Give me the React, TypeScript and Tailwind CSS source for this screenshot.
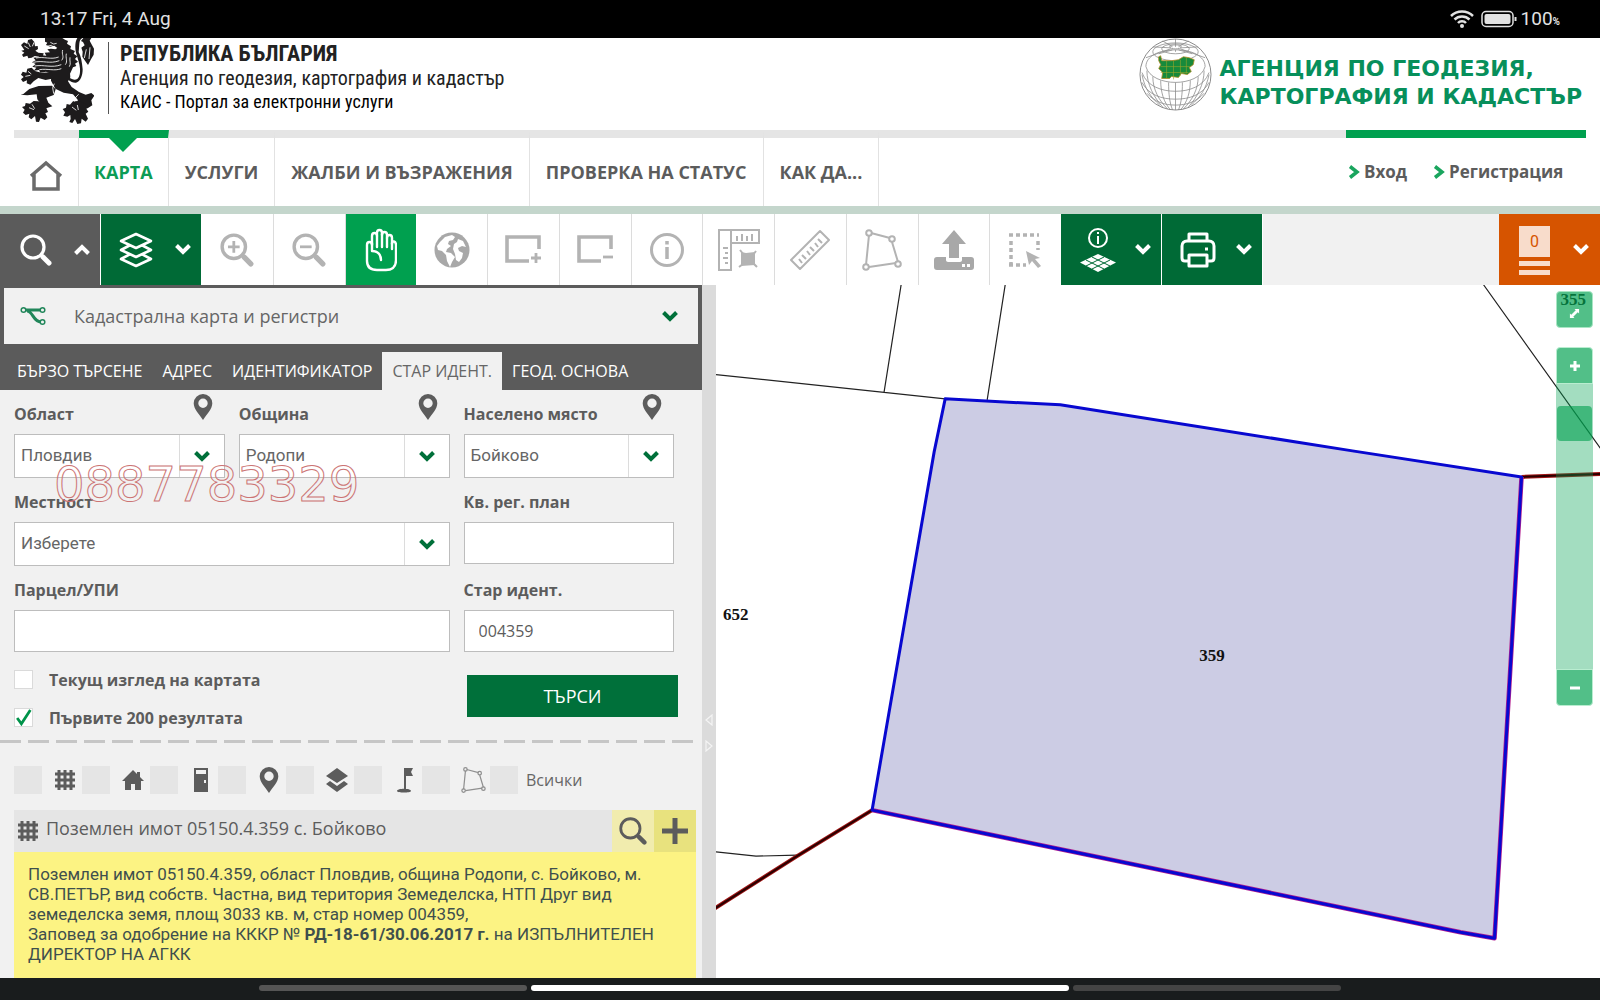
import { useState, type ReactNode } from "react";

const NAV_ITEMS = ["КАРТА", "УСЛУГИ", "ЖАЛБИ И ВЪЗРАЖЕНИЯ", "ПРОВЕРКА НА СТАТУС", "КАК ДА..."];

const SEARCH_TABS = ["БЪРЗО ТЪРСЕНЕ", "АДРЕС", "ИДЕНТИФИКАТОР", "СТАР ИДЕНТ.", "ГЕОД. ОСНОВА"];

const Chevron = ({ className = "", up = false }: { className?: string; up?: boolean }) => (
  <svg viewBox="0 0 16 11" className={className} fill="none" stroke="currentColor" strokeWidth="4" aria-hidden>
    <path d={up ? "M1.5 9.5 8 3l6.500 6.500" : "M1.500 1.500 8 8l6.500-6.500"} />
  </svg>
);

const Lion = () => (
  <svg viewBox="12 6 228 258" className="h-[86px] w-[76px]" aria-hidden>
    <g fill="#1d1b1c">
      {/* head and mane */}
      <path d="M93 6h52l8 5 9 4-3 8 12 8-2 8 14 6-4 8 11 8-7 8 9 8-9 6 4 7-10 4-11 24-20 4-28-6-22-9-17 3-4-8-16 2 8-9-12-3 10-8-11-5 11-6-7-8 16-1 3-7 20 2-5-9 16-1-8-9 11-2 13 2 6-4-9-7-13 3-12-5 4-7-7-3z" />
      {/* torso and haunch */}
      <path d="M112 106l55-7 2 25-7 12 11 17 22 15 20 8 17-5 9 8-9 14 3 15-14 9-17 2-12-10-1-18-14-16-28-5-25-12-13-24z" />
      {/* front right leg and left hind leg */}
      <path d="M114 149l-40 1-28 9-18 15-8 2 20 2 28-3 2 15 22 28 23-7-12-11-6-15 22-8 6-17z" />
      {/* upper paw */}
      <path d="M21 27l9-8 10 5 2-12 11-3 8 9 2 13 8-1 1 9-8 5 9 6 16 2-3 12-24-4-9 5-10 2-3-8-12 4-4-7 7-6-9-6 9-2z" />
      {/* middle paw */}
      <path d="M26 107l11 3 3-12 13-3 10 10 19 5 30-1 8 18-25 5-22-6-14 10-10 10-11-4 1-9-12 5-6-8 8-7-8-7z" />
      {/* hind paws */}
      <path d="M73 196l-14-1-11 8-13-2-2 9-9 3 8 8-5 9 8 7 11-4-2 11 8 6 11-10 3 17 9 1 5-13 12 7 8-8-6-12 8-4-6-14 6-8z" />
      <path d="M197 195l-20 1-9 10-10-2-2 11-10 4 7 10-5 10 12 3 9-5 1 12-4 9 9 3 8-12 7 15 11-2 2-14 12 9 7-9-7-15 8-6-6-9 7-9z" />
      {/* tail */}
      <path d="M205 6c-12 6-8 22-11 42 7 13 10 30 12 52 0 18-6 37-20 40-7 1-16-3-23-8l1-9c9 7 18 10 24 7 8-5 11-17 10-32-1-18-8-33-12-48-3-15-3-34 4-44zm3 0h24l-5 8 4 8 9 16-1 18-8 14-9 17-9-13-8-12 1-15-4-12 10-7-5-10-6-3z" />
    </g>
    <g fill="none" stroke="#fff" strokeWidth="2.500">
      <path d="M66 66c24-5 45 6 68-3M58 79c29-7 49 6 78-5M62 90c27-5 51 7 80-4M76 101c25-4 45 5 66-3M146 42c-4 14 6 20-3 31M157 53c-3 14 5 22-3 33M168 64c-2 12 4 18-2 28" />
      <path d="M43 20l6 13M31 30l13 8M55 31l5-12M34 121l15-3M42 106l10 8M45 215l15 6M54 205l8 13M174 213l13 10M190 207l3 15M217 40l-6 26M228 34l-3 35" />
      <path d="M109 19l10 5 9-2M98 31l14-3 10 7M121 143l-5 12 3 18M194 175c-8 7-12 12-12 22" />
    </g>
  </svg>
);

const Globe = () => (
  <svg viewBox="0 0 74 74" className="h-[73px] w-[73px] shrink-0" fill="none" stroke="#8b8b8b" strokeWidth=".8" aria-hidden>
    <circle cx="37" cy="37" r="36" stroke="#6c6c6c" />
    <ellipse cx="37" cy="9" rx="6" ry="2" />
    <ellipse cx="37" cy="11" rx="14" ry="5" />
    <ellipse cx="37" cy="14" rx="23" ry="9" />
    <path d="M7 29c0-11 14-17 30-17s30 6 30 17M7 29c3 11 17 16 30 16s27-5 30-16" />
    <path d="M3 35c5 14 20 19 34 19s29-5 34-19M3 45c7 13 20 17 34 17s27-4 34-17M8 56c8 9 18 12 29 12s21-3 29-12" />
    <path d="M37 45v28M30 45c0 12 1 20 4 28M44 45c0 12-1 20-4 28M22 43c0 12 3 22 10 30M52 43c0 12-3 22-10 30M14 39c0 13 6 24 15 33M60 39c0 13-6 24-15 33M8 33c0 14 7 27 16 37M66 33c0 14-7 27-16 37M3 37c3 15 9 23 18 31M71 37c-3 15-9 23-18 31" />
    <path d="M37 9V1M34 9 24 3M40 9l10-6M32 10 14 9M42 10l18-1M32 11 7 20M42 11l25 9M34 12 20 16M40 12l14 4M37 12v2" />
    <path d="M20 19l2-1 1 5h10l7-1 5-3 6 1 5 2-1 5-4 3 2 4-4 3-6-1-3 4-7-1-2 2h-8l1-6-4-4 2-4-2-4z" fill="#178a3b" stroke="#b28c22" />
    <path d="M22 29h30M22 35h28M28 23v18M35 23v19M42 22v16M48 20v16" stroke="#9aa52a" strokeWidth=".6" />
  </svg>
);

const PolygonIcon = ({ className = "" }: { className?: string }) => (
  <svg viewBox="0 0 40 42" className={className} fill="none" stroke="currentColor" strokeWidth="2" aria-hidden>
    <path d="M7 6 4 36M9 4l19 5M30 13l6 20M7 38l27-4" />
    <circle cx="7" cy="4" r="2.800" />
    <circle cx="30" cy="10" r="2.800" />
    <circle cx="36" cy="35" r="2.800" />
    <circle cx="4" cy="38" r="2.800" />
  </svg>
);

const GridIcon = ({ className = "" }: { className?: string }) => (
  <svg viewBox="0 0 20 20" className={className} fill="none" stroke="currentColor" strokeWidth="3" aria-hidden>
    <path d="M4 0v20M10 0v20M16 0v20M0 4h20M0 10h20M0 16h20" />
  </svg>
);

const PinIcon = ({ className = "" }: { className?: string }) => (
  <svg viewBox="0 0 20 26" className={className} fill="currentColor" aria-hidden>
    <path fillRule="evenodd" d="M10 0a9.300 9.300 0 0 1 9.300 9.300C19.300 15 14 20 10 26 6 20 .7 15 .7 9.300A9.300 9.300 0 0 1 10 0zm0 4.600a4.700 4.700 0 1 0 0 9.400 4.700 4.700 0 0 0 0-9.400z" />
  </svg>
);

const LensIcon = ({ className = "", sign }: { className?: string; sign?: "plus" | "minus" }) => (
  <svg viewBox="0 0 32 32" className={className} fill="none" stroke="currentColor" aria-hidden>
    <circle cx="13" cy="13" r="11" strokeWidth="3.200" />
    <path d="M21 21l2 2" strokeWidth="3" />
    <path d="M23 23l6 6" strokeWidth="5" strokeLinecap="round" />
    {sign && <path d={sign === "plus" ? "M7.500 13h11M13 7.500v11" : "M7.500 13h11"} strokeWidth="2.600" />}
  </svg>
);

const LayersIcon = () => (
  <svg viewBox="0 0 34 36" className="h-9 w-[34px]" fill="#006a36" stroke="currentColor" strokeWidth="2.600" strokeLinejoin="round" aria-hidden>
    <path d="M2 27l15-8 15 8-15 7z" />
    <path d="M2 18l15-8 15 8-15 7z" />
    <path d="M2 9l15-7 15 7-15 7z" />
  </svg>
);

const HandIcon = () => (
  <svg viewBox="0 0 32 44" className="h-11 w-8" fill="none" stroke="currentColor" strokeWidth="2.400" strokeLinecap="round" strokeLinejoin="round" aria-hidden>
    <path d="M2 17c0-4 5-4 5 0V8c0-4 5-4 5 0V5c0-4 5-4 5 0v2c0-4 5-4 5 0v3c0-4 5-4 5 0v6c0-4 4-3 4 1v15c0 7-4 10-10 10H12C6 42 2 39 2 33z" />
    <path d="M7 15v8c6 0 9 4 9 9M12 8v11M17 6v13M22 10v9M27 15v6" />
  </svg>
);

const WorldIcon = () => (
  <svg viewBox="0 0 36 36" className="h-9 w-9" aria-hidden>
    <circle cx="18" cy="18" r="17.500" fill="#a8a8a8" />
    <path fill="#fff" d="M6 10l5-5 7-2 3 2-2 3-4 1-1 3 3 2-4 3-1 3 5 1 4 4-3 5-2 5-3-6-1-6-4-4-4-1-1-4zM24 7l5 2 3 6-4-1-4 2 1 3 4 2-1 5-3 4-3-2-1-6-2-5 1-5 3-2z" />
  </svg>
);

const RectIcon = ({ plus = false }: { plus?: boolean }) => (
  <svg viewBox="0 0 38 32" className="h-8 w-[38px]" fill="none" stroke="currentColor" aria-hidden>
    <path d="M25 27H3V3h32v12" strokeWidth="3.600" />
    <path d={plus ? "M27 24h10M32 19v10" : "M27 23h10"} strokeWidth="2.800" />
  </svg>
);

const InfoIcon = () => (
  <svg viewBox="0 0 36 36" className="h-9 w-9" fill="none" stroke="currentColor" aria-hidden>
    <circle cx="18" cy="18" r="15.500" strokeWidth="3" />
    <path d="M18 15v12M18 9v3.500" strokeWidth="3.500" />
  </svg>
);

const CornerRulerIcon = () => (
  <svg viewBox="0 0 44 44" className="h-11 w-11" fill="none" stroke="currentColor" strokeWidth="2" aria-hidden>
    <path d="M2 2h40v13H14v27H2zM14 2v13M20 13V8M25 13V6M30 13V8M35 13V6M11 20H6M11 25H8M11 30H6M11 35H8" />
    <path d="M24 24l5 1 9-1v13l-14 1z" fill="currentColor" stroke="none" />
    <path d="M23 22l4 5M36 35l4 4M22 39l4-3M36 27l3-4" />
  </svg>
);

const RulerIcon = () => (
  <svg viewBox="0 0 42 42" className="h-[42px] w-[42px]" fill="none" stroke="currentColor" strokeWidth="2" strokeLinejoin="round" aria-hidden>
    <path d="M31 2l9 9-29 29-9-9z M13 34l-3-4M17 30l-4-4M21 26l-3-4M25 22l-4-4M29 18l-3-4M33 14l-4-4" />
  </svg>
);

const UploadIcon = () => (
  <svg viewBox="0 0 40 40" className="h-10 w-10" fill="#a8a8a8" aria-hidden>
    <path d="M20 0l12 14h-7v14H15V14H8z" />
    <path fillRule="evenodd" d="M3 27h9v3c0 1 1 2 2 2h12c1 0 2-1 2-2v-3h9c2 0 3 1 3 3v7c0 2-1 3-3 3H3c-2 0-3-1-3-3v-7c0-2 1-3 3-3zm25 7v3h3v-3zm5 0v3h3v-3z" />
  </svg>
);

const SelectAreaIcon = () => (
  <svg viewBox="0 0 36 38" className="h-[38px] w-9" fill="none" stroke="currentColor" strokeWidth="3.500" aria-hidden>
    <path d="M1 4h30M1 34h17" strokeDasharray="4 3" />
    <path d="M3 10v24M30 10v9" strokeDasharray="4 3" />
    <path d="M18 20l14 7-5 1 6 7-3 2-6-7-3 4z" fill="currentColor" stroke="none" />
  </svg>
);

const InfoLayersIcon = () => (
  <svg viewBox="0 0 38 46" className="h-[46px] w-[38px]" fill="none" stroke="currentColor" aria-hidden>
    <circle cx="19" cy="11" r="9" strokeWidth="2" />
    <path d="M19 9v8M19 5v2" strokeWidth="2" />
    <path d="M19 27l18 8.500L19 45 1 35.500z" fill="currentColor" stroke="none" />
    <path d="M13 30l18 9M7 33l18 9M25 30 7 39M31 33l-18 9" stroke="#006a36" strokeWidth="1" />
  </svg>
);

const PrinterIcon = () => (
  <svg viewBox="0 0 36 36" className="h-9 w-9" fill="none" stroke="currentColor" strokeWidth="3" strokeLinejoin="round" aria-hidden>
    <path d="M9 10V2h18v8M8 29H5c-2 0-3-1-3-3V14c0-3 2-5 5-5h22c3 0 5 2 5 5v12c0 2-1 3-3 3h-3" />
    <path d="M9 23h18v11H9z" />
    <path d="M25 17h3" />
  </svg>
);

const ToolButton = ({ label, children }: { label: string; children: ReactNode }) => (
  <button type="button" aria-label={label} className="flex flex-1 items-center justify-center border-r border-[#dcdcdc] text-[#b3b3b3] last:border-r-0">
    {children}
  </button>
);

const MenuButton = ({ label, className, up, children }: { label: string; className: string; up?: boolean; children: ReactNode }) => (
  <button type="button" aria-label={label} className={`flex w-[101px] shrink-0 items-center justify-between border-r border-white pr-2.5 pl-[18px] text-white ${className}`}>
    {children}
    <Chevron up={up} className="h-[11px] w-4" />
  </button>
);

const FieldLabel = ({ id, text, pin }: { id: string; text: string; pin?: boolean }) => (
  <div className="flex h-11 justify-between">
    <label htmlFor={id} className="pt-3 text-base leading-6 font-bold text-[#5c5c5c]">{text}</label>
    {pin && <PinIcon className="mt-1 mr-3 h-[26px] w-5 text-[#5c5c5c]" />}
  </div>
);

const SelectField = ({ id, label, value, pin, className = "" }: { id: string; label: string; value: string; pin?: boolean; className?: string }) => (
  <div className={className}>
    <FieldLabel id={id} text={label} pin={pin} />
    <div className="relative">
      <select id={id} className="h-11 w-full appearance-none border border-[#bdbdbd] bg-white px-1.5 font-[Roboto,sans-serif] text-[17px] text-[#666]">
        <option>{value}</option>
      </select>
      <span className="pointer-events-none absolute top-px right-px bottom-px flex w-[45px] items-center justify-center border-l border-[#dcdcdc] text-[#00703a]">
        <Chevron className="h-[11px] w-4" />
      </span>
    </div>
  </div>
);

const TextField = ({ id, label, value = "", className = "" }: { id: string; label: string; value?: string; className?: string }) => (
  <div className={className}>
    <FieldLabel id={id} text={label} />
    <input id={id} type="text" defaultValue={value} className="h-[42px] w-full border border-[#bdbdbd] bg-white px-3.5 text-base text-[#5c5c5c]" />
  </div>
);

const CheckField = ({ id, label, checked }: { id: string; label: string; checked?: boolean }) => (
  <div className="flex h-[38px] items-start gap-4">
    <span className="relative mt-1.5 h-[19px] w-[19px]">
      <input id={id} type="checkbox" defaultChecked={checked} className="peer block h-[19px] w-[19px] appearance-none border border-[#dadada] bg-white" />
      <svg viewBox="0 0 18 18" className="pointer-events-none absolute inset-0 hidden text-[#00934a] peer-checked:block" fill="none" stroke="currentColor" strokeWidth="2.600" aria-hidden>
        <path d="M3 9.500 7 15 15.500 2" />
      </svg>
    </span>
    <label htmlFor={id} className="pt-1 text-base leading-6 font-bold text-[#5c5c5c]">{label}</label>
  </div>
);

const FILTERS: { label: string; icon: ReactNode }[] = [
  { label: "Поземлени имоти", icon: <GridIcon className="h-5 w-5" /> },
  {
    label: "Сгради",
    icon: (
      <svg viewBox="0 0 22 20" className="h-5 w-[22px]" fill="currentColor" aria-hidden>
        <path d="M11 0l4 4V2h3v5l4 4h-3v9h-6v-6H9v6H3v-9H0z" />
      </svg>
    ),
  },
  {
    label: "Обекти в сграда",
    icon: (
      <svg viewBox="0 0 16 24" className="h-6 w-4" fill="currentColor" aria-hidden>
        <path fillRule="evenodd" d="M1 0h14v24H1zm2 2v4h10V2zm8 10v3h2v-3z" />
      </svg>
    ),
  },
  { label: "Адреси", icon: <PinIcon className="h-[26px] w-5" /> },
  {
    label: "Слоеве",
    icon: (
      <svg viewBox="0 0 24 24" className="h-6 w-6" fill="currentColor" aria-hidden>
        <path d="M12 0l11 8-11 7L1 8zM1 16l4-3 7 5 7-5 4 3-11 8z" />
      </svg>
    ),
  },
  {
    label: "Геодезически точки",
    icon: (
      <svg viewBox="0 0 18 26" className="h-[26px] w-[18px]" fill="currentColor" aria-hidden>
        <path d="M8 1h9l-2 4 2 4h-7v13H8zM1 24c0-3 14-3 14 0 0 2-14 2-14 0z" />
      </svg>
    ),
  },
  { label: "Кадастрални райони", icon: <PolygonIcon className="h-[26px] w-[25px] text-[#8f8f8f]" /> },
];

const StatusBar = () => (
  <div className="flex h-[38px] shrink-0 items-center justify-between bg-black px-10 font-[Roboto,sans-serif] text-[19px] text-[#e2e2e2]">
    <span>13:17 Fri, 4 Aug</span>
    <span className="flex items-center">
      <svg viewBox="0 0 24 18" className="mr-[7px] h-[18px] w-6" fill="none" stroke="currentColor" strokeWidth="2.500" aria-hidden>
        <path d="M1 6c6-6 16-6 22 0M4.500 9.500c4-4 11-4 15 0M8 13c2-2.200 6-2.200 8 0" />
        <circle cx="12" cy="16" r="2" fill="currentColor" stroke="none" />
      </svg>
      <svg viewBox="0 0 36 18" className="mr-1 h-[18px] w-9" fill="none" stroke="currentColor" strokeWidth="1.500" aria-hidden>
        <rect x="1" y="1.500" width="31" height="15" rx="4" />
        <rect x="3.500" y="4" width="26" height="10" rx="2" fill="currentColor" stroke="none" />
        <path d="M34.500 7v4" strokeWidth="2" />
      </svg>
      <span>100<span className="text-[10px] font-bold">%</span></span>
    </span>
  </div>
);

const Header = () => (
  <header className="flex h-[92px] shrink-0 justify-between overflow-hidden bg-white pr-[18px] pl-[18px]">
    <div className="flex">
      <Lion />
      <div lang="bg" className="mt-1 ml-3.5 h-[72px] border-l border-[#555] pl-[11px] font-['Liberation_Sans_Narrow','Roboto_Condensed','Open_Sans_Condensed','Roboto',sans-serif] text-[#222]">
        <p className="text-[22px] leading-6 font-bold">РЕПУБЛИКА БЪЛГАРИЯ</p>
        <p className="text-[20px] leading-6">Агенция по геодезия, картография и кадастър</p>
        <p className="text-[18px] leading-6 text-black">КАИС - Портал за електронни услуги</p>
      </div>
    </div>
    <div className="flex gap-2">
      <Globe />
      <p className="pt-[17px] font-['DejaVu_Sans',sans-serif] text-[22px] leading-7 font-bold whitespace-nowrap text-[#078f5b]">
        АГЕНЦИЯ ПО ГЕОДЕЗИЯ,
        <br />
        КАРТОГРАФИЯ И КАДАСТЪР
      </p>
    </div>
  </header>
);

const Navigation = () => (
  <nav className="flex h-[84px] shrink-0 border-b-8 border-[#c4d6cc] bg-white px-3.5 text-lg font-bold text-[#5c5c5c]">
    <a href="#home" aria-label="Начало" className="flex w-[65px] items-center justify-center border-t-8 border-r border-t-[#e5e5e5] border-r-[#e2e2e2] pt-2">
      <svg viewBox="0 0 34 32" className="h-8 w-[34px]" fill="none" stroke="#6b6b6b" strokeWidth="3.500" aria-hidden>
        <path d="M2 16 17 3l15 13M5 13v16h24V13" />
      </svg>
    </a>
    {NAV_ITEMS.map((item, index) => (
      <a
        key={item}
        href="#"
        className={
          index === 0
            ? "relative border-t-8 border-r border-t-[#00a04f] border-r-[#e2e2e2] px-[15px] pt-5 text-[#0d9c55]"
            : "border-t-8 border-r border-t-[#e5e5e5] border-r-[#e2e2e2] px-4 pt-5"
        }
      >
        {index === 0 && (
          <svg viewBox="0 0 28 14" className="absolute top-0 left-1/2 h-3.5 w-7 -translate-x-1/2" aria-hidden>
            <path d="M0 0h28L14 14z" fill="#00a04f" />
          </svg>
        )}
        {item}
      </a>
    ))}
    <div className="flex-1 border-t-8 border-[#e5e5e5]" />
    <div className="flex w-60 gap-[26px] border-t-8 border-[#00a04f] pt-5 pl-0.5 text-[17px] leading-7">
      {["Вход", "Регистрация"].map((item) => (
        <a key={item} href="#" className="flex items-start gap-1 whitespace-nowrap">
          <svg viewBox="0 0 12 14" className="mt-[7px] h-3.5 w-3" fill="none" stroke="#1aa55e" strokeWidth="3.500" aria-hidden>
            <path d="M2 1.500 9 7l-7 5.500" />
          </svg>
          {item}
        </a>
      ))}
    </div>
  </nav>
);

const Toolbar = () => (
  <div className="flex h-[71px] shrink-0 bg-[#f1f1f1]">
    <MenuButton label="Търсене" className="bg-[#5b5b5b]" up>
      <LensIcon className="ml-0.5 h-8 w-8" />
    </MenuButton>
    <MenuButton label="Слоеве" className="bg-[#006a36]">
      <LayersIcon />
    </MenuButton>
    <div className="flex w-[859px] shrink-0 bg-white">
      <ToolButton label="Увеличи"><LensIcon sign="plus" className="h-[34px] w-[34px]" /></ToolButton>
      <ToolButton label="Намали"><LensIcon sign="minus" className="h-[34px] w-[34px]" /></ToolButton>
      <button type="button" aria-label="Премести" className="flex flex-1 items-center justify-center bg-[#00a04f] text-white">
        <HandIcon />
      </button>
      <ToolButton label="Цялата карта"><WorldIcon /></ToolButton>
      <ToolButton label="Добави правоъгълник"><RectIcon plus /></ToolButton>
      <ToolButton label="Премахни правоъгълник"><RectIcon /></ToolButton>
      <ToolButton label="Информация"><InfoIcon /></ToolButton>
      <ToolButton label="Измери площ"><CornerRulerIcon /></ToolButton>
      <ToolButton label="Измери разстояние"><RulerIcon /></ToolButton>
      <ToolButton label="Начертай полигон"><PolygonIcon className="h-[42px] w-10" /></ToolButton>
      <ToolButton label="Качи файл"><UploadIcon /></ToolButton>
      <ToolButton label="Избери област"><SelectAreaIcon /></ToolButton>
    </div>
    <MenuButton label="Информация за слоеве" className="bg-[#006a36]">
      <InfoLayersIcon />
    </MenuButton>
    <MenuButton label="Печат" className="bg-[#006a36]">
      <PrinterIcon />
    </MenuButton>
    <button type="button" aria-label="Кошница" className="ml-auto flex w-[101px] shrink-0 items-center justify-between bg-[#d65400] pr-[11px] pl-5 text-white">
      <span className="flex w-[31px] flex-col gap-1 pt-0.5">
        <span className="flex h-[31px] items-center justify-center bg-[#f8dccb] font-[Roboto,sans-serif] text-base text-[#d65400]">0</span>
        <span className="h-[5px] bg-[#f8dccb]" />
        <span className="h-[5px] bg-[#f8dccb]" />
      </span>
      <Chevron className="h-[11px] w-4" />
    </button>
  </div>
);

const SearchPanel = () => {
  const [activeTab, setActiveTab] = useState("СТАР ИДЕНТ.");

  return (
    <aside className="relative flex w-[43.9%] shrink-0 flex-col overflow-hidden bg-[#f1f1f1]">
      <div className="shrink-0 bg-[#5b5b5b] pt-[3px]">
        <button type="button" className="mx-1 flex h-14 w-[calc(100%-8px)] items-center bg-[#f1f1f1] px-4 text-lg text-[#666]">
          <svg viewBox="0 0 26 20" className="mr-7 h-5 w-[26px]" fill="none" stroke="#21865a" strokeWidth="1.500" aria-hidden>
            <path d="M6 4h14M7 5c6 0 6 11 14 11" strokeWidth="3" />
            <circle cx="3.500" cy="4" r="2.300" />
            <circle cx="22.500" cy="4" r="2.300" />
            <circle cx="22.500" cy="16" r="2.300" />
          </svg>
          Кадастрална карта и регистри
          <Chevron className="mr-1 ml-auto h-[11px] w-4 text-[#00703a]" />
        </button>
        <div role="tablist" className="mt-2 flex h-[38px] pl-[7px] text-base">
          {SEARCH_TABS.map((tab) => (
            <button
              key={tab}
              type="button"
              role="tab"
              aria-selected={tab === activeTab}
              onClick={() => setActiveTab(tab)}
              className={tab === activeTab ? "bg-[#f1f1f1] px-2.5 whitespace-nowrap text-[#666]" : "px-2.5 whitespace-nowrap text-white"}
            >
              {tab}
            </button>
          ))}
        </div>
      </div>

      <form className="grid shrink-0 grid-cols-3 gap-x-3.5 pr-7 pl-3.5" onSubmit={(event) => event.preventDefault()}>
        <SelectField id="region" label="Област" value="Пловдив" pin />
        <SelectField id="municipality" label="Община" value="Родопи" pin />
        <SelectField id="settlement" label="Населено място" value="Бойково" pin />
        <SelectField id="locality" label="Местност" value="Изберете" className="col-span-2" />
        <TextField id="quarter" label="Кв. рег. план" />
        <TextField id="parcel" label="Парцел/УПИ" className="col-span-2" />
        <TextField id="old-id" label="Стар идент." value="004359" />
        <div className="col-span-2 mt-3">
          <CheckField id="current-view" label="Текущ изглед на картата" />
          <CheckField id="first-200" label="Първите 200 резултата" checked />
        </div>
        <button type="submit" className="-mr-1 mt-[23px] ml-[3px] h-[42px] bg-[#00703a] text-lg text-white">ТЪРСИ</button>
      </form>

      <svg className="h-[3px] w-[99%] shrink-0" aria-hidden>
        <line x1="0" y1="1.500" x2="100%" y2="1.500" stroke="#c6c6c6" strokeWidth="3" strokeDasharray="21 7" />
      </svg>

      <div className="flex shrink-0 items-center px-3.5 pt-[23px] pb-4 text-[#5c5c5c]">
        {FILTERS.map(({ label, icon }) => (
          <label key={label} aria-label={label} className="flex h-7 w-[68px] shrink-0 items-center">
            <input type="checkbox" className="h-7 w-7 shrink-0 appearance-none bg-[#e5e5e5]" />
            <span className="flex flex-1 items-center justify-center pl-1.5">{icon}</span>
          </label>
        ))}
        <label className="flex h-7 items-center gap-2 text-base text-[#666]">
          <input type="checkbox" className="h-7 w-7 appearance-none bg-[#e5e5e5]" />
          Всички
        </label>
      </div>

      <article className="mr-1.5 ml-3.5 flex flex-1 flex-col">
        <div className="flex h-[42px] shrink-0 items-stretch bg-[#e5e5e5] text-[#5c5c5c]">
          <GridIcon className="mt-[11px] ml-1 h-5 w-5" />
          <h3 className="flex-1 pt-1.5 pl-2 text-lg leading-6">Поземлен имот 05150.4.359 с. Бойково</h3>
          <button type="button" aria-label="Покажи на картата" className="flex w-[42px] items-center justify-center bg-[#f1ecae]">
            <LensIcon className="h-7 w-7" />
          </button>
          <button type="button" aria-label="Добави" className="flex w-[42px] items-center justify-center bg-[#e8e27e]">
            <svg viewBox="0 0 26 26" className="h-[26px] w-[26px]" stroke="currentColor" strokeWidth="5" aria-hidden>
              <path d="M0 13h26M13 0v26" />
            </svg>
          </button>
        </div>
        <p className="flex-1 bg-[#fcf383] px-3.5 pt-3 font-[Roboto,sans-serif] text-[17px] leading-5 text-[#3f4f4d]">
          Поземлен имот 05150.4.359, област Пловдив, община Родопи, с. Бойково, м. СВ.ПЕТЪР, вид собств. Частна, вид
          територия Земеделска, НТП Друг вид земеделска земя, площ 3033 кв. м, стар номер 004359,
          <br />
          Заповед за одобрение на КККР № <strong>РД-18-61/30.06.2017 г.</strong> на ИЗПЪЛНИТЕЛЕН ДИРЕКТОР НА АГКК
        </p>
      </article>

      {/* phone number watermark laid over the form */}
      <span className="pointer-events-none absolute top-[175px] left-[54px] font-['DejaVu_Sans',sans-serif] text-5xl text-transparent [-webkit-text-stroke:1px_#cc7474]">
        0887783329
      </span>
    </aside>
  );
};

const ParcelMap = () => (
  <main className="relative flex-1 overflow-hidden bg-white">
    <svg viewBox="717 285 883 693" preserveAspectRatio="xMidYMid slice" className="absolute inset-0 h-full w-full" aria-label="Кадастрална карта">
      <g fill="none" stroke="#222" strokeWidth="1.200">
        <path d="M710 374l236 25M902 285l-17 107M1006 285l-18 115M1484 285l120 168M710 851l47 5 41-1" />
      </g>
      <path d="M946 399l115 6 292 46 169 26-27 461-34-6-588-122 62-358z" fill="#cccce4" />
      <g fill="none" strokeLinejoin="round">
        <path d="M710 912l88-56 75-46M1522 477l82-3" stroke="#a01515" strokeWidth="4" />
        <path d="M710 912l88-56 75-46M1522 477l82-3" stroke="#2a0000" strokeWidth="2" />
        <path d="M873 810l588 122 34 6 27-461" stroke="#b02090" strokeWidth="4.500" />
        <path d="M946 399l115 6 292 46 169 26-27 461-34-6-588-122 62-358z" stroke="#0808d0" strokeWidth="3" />
      </g>
      <g fill="#111" fontFamily="Liberation Serif, serif" fontSize="17" fontWeight="700">
        <text x="724" y="620">652</text>
        <text x="1200" y="661">359</text>
        <text x="1561" y="305">355</text>
      </g>
    </svg>
    <div className="absolute top-1.5 right-[7px] flex w-[37px] flex-col text-white">
      <button type="button" aria-label="Цял екран" className="flex h-[37px] items-end justify-center rounded-sm border border-[#a9e6c4] bg-[#00a04f]/68 pb-2">
        <svg viewBox="0 0 12 12" className="h-[11px] w-[11px]" fill="currentColor" stroke="currentColor" aria-hidden>
          <path d="M6 1h5v5zM1 6v5h5z" stroke="none" />
          <path d="M3 9l6-6" strokeWidth="3" />
        </svg>
      </button>
      <button type="button" aria-label="Приближи" className="mt-[19px] flex h-[37px] items-center justify-center rounded-t-sm border border-[#b9edd0] bg-[#00a04f]/68">
        <svg viewBox="0 0 12 12" className="h-3 w-3" stroke="currentColor" strokeWidth="3" aria-hidden>
          <path d="M1 6h10M6 1v10" />
        </svg>
      </button>
      <div className="h-[285px] bg-[#00a04f]/36 pt-[22px]">
        <div className="mx-px h-[35px] rounded-sm bg-[#00a04f]/60" />
      </div>
      <button type="button" aria-label="Отдалечи" className="flex h-[37px] items-center justify-center rounded-b-sm border border-[#b9edd0] bg-[#00a04f]/68">
        <svg viewBox="0 0 12 12" className="h-3 w-3" stroke="currentColor" strokeWidth="3" aria-hidden>
          <path d="M1 6h10" />
        </svg>
      </button>
    </div>
  </main>
);

export default function App() {
  return (
    <div className="flex h-screen flex-col overflow-hidden font-['Open_Sans','Noto_Sans',sans-serif]">
      <StatusBar />
      <Header />
      <Navigation />
      <Toolbar />
      <div className="flex min-h-0 flex-1">
        <SearchPanel />
        <div className="flex w-3.5 shrink-0 flex-col items-center gap-3.5 bg-[#dbdbdb] pt-[429px]">
          <svg viewBox="0 0 8 12" className="h-3 w-2" fill="none" stroke="#f4f4f4" strokeWidth="1.200" aria-hidden>
            <path d="M7 1v10L1 6z" />
          </svg>
          <svg viewBox="0 0 8 12" className="h-3 w-2" fill="none" stroke="#f4f4f4" strokeWidth="1.200" aria-hidden>
            <path d="M1 1v10l6-5z" />
          </svg>
        </div>
        <ParcelMap />
      </div>
      <footer className="flex h-[22px] shrink-0 justify-center gap-1 bg-[#191c1d] pt-[7px]">
        <span className="h-1.5 w-[268px] rounded-full bg-[#555]" />
        <span className="h-1.5 w-[538px] rounded-full bg-white" />
        <span className="h-1.5 w-[268px] rounded-full bg-[#444]" />
      </footer>
    </div>
  );
}
